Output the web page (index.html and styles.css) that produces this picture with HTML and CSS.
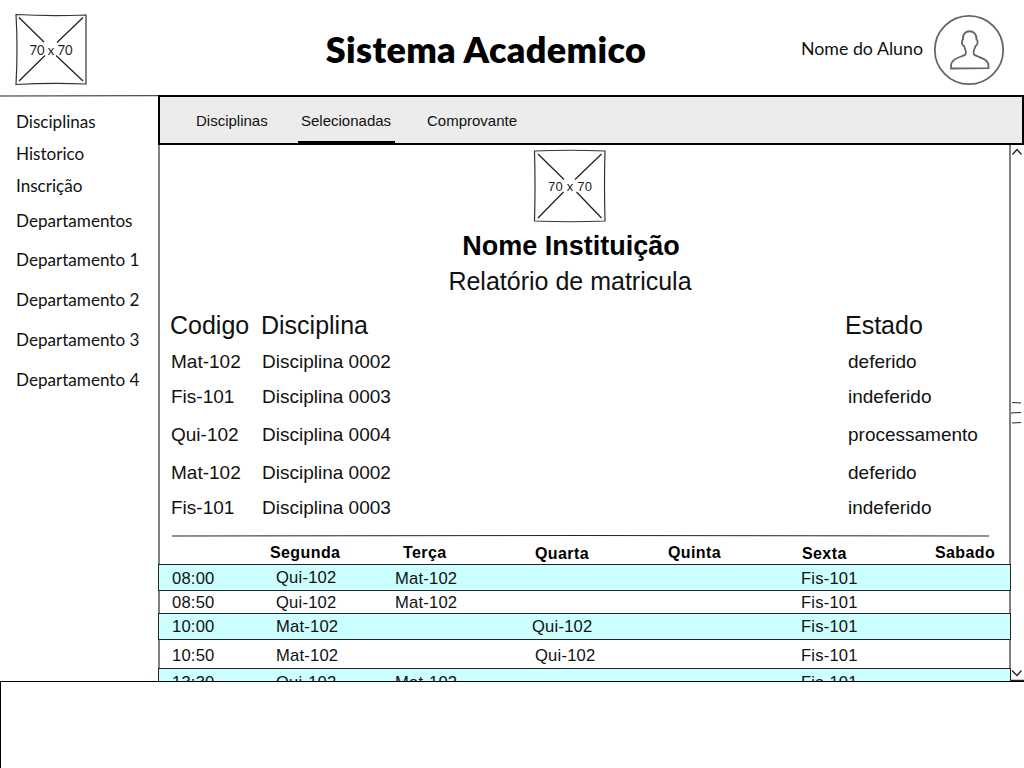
FILE: index.html
```html
<!DOCTYPE html>
<html lang="pt">
<head>
<meta charset="utf-8">
<title>Sistema Academico</title>
<link rel="stylesheet" href="styles.css">
</head>
<body>
<header class="header">
  <svg class="placeholder" viewBox="0 0 74 74">
    <path class="edge" d="M2 1.5Q36 3.5 72 2V71Q37 69.5 2 71.5Q4 36 2 1.5Z"/>
    <path class="cross" d="M5 4.5L30 29M43 29.5L69 4.5M5 68L31 42.5M42 42.5L69 68"/>
    <text class="size lato" x="37" y="41.5" text-anchor="middle" textLength="43">70 x 70</text>
  </svg>
  <h1 class="title">Sistema Academico</h1>
  <div class="user">
    <span class="user-name">Nome do Aluno</span>
    <svg class="avatar" viewBox="0 0 72 72">
      <circle cx="36" cy="36" r="34.2"/>
      <path d="M18 54.5V52C18 43.500 30 43 32.500 40.500C34 37 32 36 31 32C28.500 31.500 28.500 26 30 25.500C28.500 14.500 44.500 14.500 43.500 25.500C45 26 45 31.500 42.500 32C41.500 36 39.500 37 41 40.500C43.500 43 55.500 44 55.500 52V54.200Z"/>
    </svg>
  </div>
</header>
<div class="main">
  <svg class="rule-top" viewBox="0 0 158 2"><path d="M0 1L158 .7"/></svg>
  <nav class="sidebar">
    <a>Disciplinas</a><a>Historico</a><a>Inscrição</a>
    <a class="group">Departamentos</a>
    <a class="dept">Departamento 1</a><a class="dept">Departamento 2</a><a class="dept">Departamento 3</a><a class="dept">Departamento 4</a>
  </nav>
  <div class="content">
    <div class="tabs">
      <a class="tab first">Disciplinas</a><a class="tab active">Selecionadas</a><a class="tab last">Comprovante</a>
    </div>
    <div class="scroll-area">
      <div class="report">
        <svg class="placeholder" viewBox="0 0 74 74">
          <path class="edge" d="M1.500 2Q36 .5 72 2Q71 36 72 72Q37 73.500 1.500 72Q2.500 37 1.500 2Z"/>
          <path class="cross" d="M5 5L31 30.500M42 30.500L68.500 5M5 69L30.500 43M43.500 43L68.500 69"/>
          <text class="size arial" x="37" y="42" text-anchor="middle" textLength="44">70 x 70</text>
        </svg>
        <h2 class="institution">Nome Instituição</h2>
        <p class="subtitle">Relatório de matricula</p>
        <div class="courses">
          <div class="course head"><span>Codigo</span><span>Disciplina</span><span>Estado</span></div>
          <div class="course"><span>Mat-102</span><span>Disciplina 0002</span><span>deferido</span></div>
          <div class="course"><span>Fis-101</span><span>Disciplina 0003</span><span>indeferido</span></div>
          <div class="course tall"><span>Qui-102</span><span>Disciplina 0004</span><span>processamento</span></div>
          <div class="course mid"><span>Mat-102</span><span>Disciplina 0002</span><span>deferido</span></div>
          <div class="course last"><span>Fis-101</span><span>Disciplina 0003</span><span>indeferido</span></div>
        </div>
        <svg class="divider" viewBox="0 0 817 3"><path d="M0 2L400 1.500L817 2"/></svg>
        <div class="days"><span>Segunda</span><span>Terça</span><span class="low">Quarta</span><span>Quinta</span><span class="low">Sexta</span><span>Sabado</span></div>
        <div class="slot shaded lower"><span>08:00</span><span class="high">Qui-102</span><span>Mat-102</span><span></span><span>Fis-101</span></div>
        <div class="slot short"><span>08:50</span><span>Qui-102</span><span>Mat-102</span><span></span><span>Fis-101</span></div>
        <div class="slot shaded"><span>10:00</span><span>Mat-102</span><span></span><span>Qui-102</span><span>Fis-101</span></div>
        <div class="slot plain"><span>10:50</span><span>Mat-102</span><span></span><span class="shift">Qui-102</span><span>Fis-101</span></div>
        <div class="slot shaded lower"><span>13:30</span><span>Qui-102</span><span>Mat-102</span><span></span><span>Fis-101</span></div>
      </div>
      <div class="scrollbar">
        <svg class="arrow" viewBox="0 0 13 12"><path d="M1.500 9.500L6 4.500L10.500 9.500"/></svg>
        <svg class="grip" viewBox="0 0 13 24"><path d="M1 1.500L10 2M0 12L10 11.500M1 22L10 21.500"/></svg>
        <svg class="arrow" viewBox="0 0 13 12"><path d="M1 1.500L6 6.500L10.500 1.500M0 11.500H13"/></svg>
      </div>
    </div>
  </div>
</div>
<footer class="footer"></footer>
</body>
</html>
```
FILE: styles.css
```css
* { box-sizing: border-box; }
body {
  margin: 0;
  width: 1024px;
  height: 768px;
  overflow: hidden;
  display: flex;
  flex-direction: column;
  background: #fff;
  color: #111;
  font-family: "Liberation Sans", Arial, sans-serif;
}
h1, h2, p { margin: 0; }
svg { display: block; fill: none; stroke: #222; }
.header {
  height: 95px;
  flex: none;
  display: grid;
  grid-template-columns: 312px 320px 1fr;
  padding: 13px 19px 0 14px;
  font-family: Lato, sans-serif;
}
.placeholder { width: 74px; height: 74px; }
.edge { stroke: #333; stroke-width: 1.2; }
.cross { stroke-width: 1.3; }
.size { fill: #222; stroke: none; font-size: 13px; }
.lato { font-family: Lato, sans-serif; }
.arial { font-family: "Liberation Sans", Arial, sans-serif; }
.title {
  font-size: 36px;
  line-height: 72px;
  font-weight: 800;
  letter-spacing: .33px;
  color: #000;
  display: flex;
  justify-content: center;
  white-space: nowrap;
}
.user { display: flex; justify-content: flex-end; gap: 10px; }
.user-name { font-size: 17.8px; line-height: 70px; white-space: nowrap; }
.avatar { width: 72px; height: 72px; flex: none; margin-top: 1px; stroke: #666; stroke-width: 1.8; }
.main {
  height: 586px;
  flex: none;
  display: grid;
  grid-template-columns: 158px 866px;
  grid-template-rows: 2px 584px;
}
.rule-top { width: 158px; height: 2px; }
.sidebar {
  grid-row: 2;
  display: flex;
  flex-direction: column;
  padding: 9px 0 0 16px;
  font: 17.1px/32px Lato, sans-serif;
}
.sidebar .group { line-height: 38px; }
.sidebar .dept { line-height: 40px; }
.content { grid-column: 2; grid-row: 1 / 3; display: flex; flex-direction: column; }
.tabs {
  height: 50px;
  flex: none;
  display: flex;
  border: 2px solid #000;
  background: #ececec;
  padding-left: 36px;
  font-size: 15px;
  line-height: 47px;
}
.tab.first { width: 102px; }
.tab.active { width: 97px; padding-left: 3px; border-bottom: 2px solid #000; }
.tab.last { margin-left: 32px; }
.scroll-area { height: 536px; display: flex; overflow: hidden; }
.report {
  width: 853px;
  flex: none;
  border: solid #808080;
  border-width: 0 2px;
  padding-top: 4px;
}
.report .placeholder { margin-left: 373px; }
.institution { width: 822px; font-size: 27px; line-height: 46px; text-align: center; color: #000; }
.subtitle { width: 820px; font-size: 25px; line-height: 24px; text-align: center; }
.courses { padding: 14px 0 0 11px; }
.course { display: grid; grid-template-columns: 91px 586px 1fr; font-size: 19px; line-height: 35px; white-space: nowrap; }
.course.head { font-size: 25px; line-height: 36px; margin: 0 0 1px -1px; }
.course.head span:last-child { margin-left: -2px; }
.course.tall { line-height: 41px; }
.course.mid { line-height: 36px; }
.course.last { line-height: 34px; }
.divider { width: 817px; height: 3px; margin: 9px 0 0 12px; }
.days {
  height: 27px;
  display: grid;
  grid-template-columns: 133px 132px 133px 134px 133px 1fr;
  padding-left: 110px;
  font-size: 16px;
  font-weight: bold;
  letter-spacing: .4px;
  line-height: 32px;
  color: #000;
}
.low { padding-top: 1px; }
.slot {
  display: grid;
  grid-template-columns: 104px 119px 137px 269px 1fr;
  font-size: 16.6px;
  letter-spacing: .2px;
  line-height: 26px;
  padding-left: 12px;
}
.shaded {
  height: 27px;
  margin: 0 -2px;
  padding-left: 13px;
  border: 1px solid #222;
  background: #cff;
}
.lower { line-height: 28px; }
.short { height: 22px; line-height: 24px; }
.plain { height: 28px; line-height: 32px; }
.high { margin-top: -1px; }
.shift { padding-left: 3px; }
.scrollbar {
  width: 13px;
  display: flex;
  flex-direction: column;
  justify-content: space-between;
}
.arrow { width: 13px; height: 12px; stroke-width: 1.3; }
.grip { width: 13px; height: 24px; }
.footer { flex: 1; border: solid #000; border-width: 1px 0 0 1px; }
```
